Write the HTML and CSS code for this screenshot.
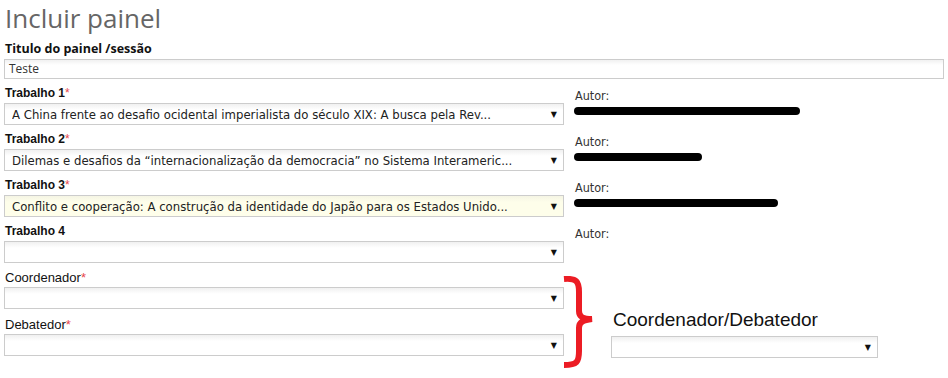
FILE: index.html
```html
<!DOCTYPE html>
<html lang="pt">
<head>
    <meta charset="UTF-8">
    <title>Incluir painel</title>
    <link rel="stylesheet" href="styles.css">
</head>
<body>
    <div class="page">
        <h1 class="page-title">Incluir painel</h1>

        <div class="field field-title">
            <label class="title-label">Titulo do painel /sessão</label>
            <div class="text-input">Teste</div>
        </div>

        <div class="work-row">
            <div class="field">
                <label>Trabalho 1<span class="req">*</span></label>
                <div class="select">
                    <span class="select-text">A China frente ao desafio ocidental imperialista do século XIX: A busca pela Rev...</span>
                    <span class="arrow">&#9660;</span>
                </div>
            </div>
            <div class="author">
                <div class="author-label">Autor:</div>
                <div class="redacted" style="width: 226px"></div>
            </div>
        </div>

        <div class="work-row">
            <div class="field">
                <label>Trabalho 2<span class="req">*</span></label>
                <div class="select">
                    <span class="select-text">Dilemas e desafios da “internacionalização da democracia” no Sistema Interameric...</span>
                    <span class="arrow">&#9660;</span>
                </div>
            </div>
            <div class="author">
                <div class="author-label">Autor:</div>
                <div class="redacted" style="width: 128px"></div>
            </div>
        </div>

        <div class="work-row">
            <div class="field">
                <label>Trabalho 3<span class="req">*</span></label>
                <div class="select filled">
                    <span class="select-text">Conflito e cooperação: A construção da identidade do Japão para os Estados Unido...</span>
                    <span class="arrow">&#9660;</span>
                </div>
            </div>
            <div class="author">
                <div class="author-label">Autor:</div>
                <div class="redacted" style="width: 204px"></div>
            </div>
        </div>

        <div class="work-row">
            <div class="field">
                <label>Trabalho 4</label>
                <div class="select">
                    <span class="select-text"></span>
                    <span class="arrow">&#9660;</span>
                </div>
            </div>
            <div class="author">
                <div class="author-label">Autor:</div>
            </div>
        </div>

        <div class="people-row">
            <div class="people-col">
                <div class="field">
                    <label class="plain">Coordenador<span class="req">*</span></label>
                    <div class="select">
                        <span class="select-text"></span>
                        <span class="arrow">&#9660;</span>
                    </div>
                </div>
                <div class="field">
                    <label class="plain">Debatedor<span class="req">*</span></label>
                    <div class="select">
                        <span class="select-text"></span>
                        <span class="arrow">&#9660;</span>
                    </div>
                </div>
            </div>

            <svg class="brace" width="32" height="92" viewBox="0 0 32 92">
                <path d="M1 3 C14 2 16 6 16 16 L16 35 C16 41 20 43 29 43 C20 44 16 46 16 52 L16 75 C16 86 14 89 1 89"
                      fill="none" stroke="#ec1c24" stroke-width="6" stroke-linejoin="miter"/>
            </svg>

            <div class="joint">
                <div class="joint-label">Coordenador/Debatedor</div>
                <div class="select small">
                    <span class="select-text"></span>
                    <span class="arrow">&#9660;</span>
                </div>
            </div>
        </div>
    </div>
</body>
</html>
```

FILE: styles.css
```css
body {
    margin: 0;
    background-color: #fff;
    font-family: "Liberation Sans", Arial, sans-serif;
    color: #222;
}

.page {
    padding: 0 4px;
}

.page-title {
    margin: 0;
    padding-left: 1px;
    font-family: "Open Sans", sans-serif;
    font-size: 26px;
    font-weight: normal;
    line-height: 36px;
    color: #666;
}

.field label {
    display: block;
    height: 15px;
    margin-bottom: 2px;
    padding-left: 1px;
    font-size: 12px;
    font-weight: bold;
    line-height: 15px;
    color: #111;
}

.field-title {
    margin-top: 4px;
}

.field-title .title-label {
    height: 17px;
    margin-bottom: 2px;
    font-family: "Open Sans", sans-serif;
    font-size: 12.5px;
    line-height: 17px;
}

.text-input {
    height: 18px;
    padding: 0 4px;
    border: 1px solid #ccc;
    background: linear-gradient(#f1f1f1, #fff 5px);
    font-family: "Open Sans", sans-serif;
    font-size: 12px;
    line-height: 18px;
    color: #333;
}

.req {
    color: #e8474c;
    font-weight: normal;
}

.work-row {
    display: grid;
    grid-template-columns: 560px 1fr;
    column-gap: 11px;
    margin-top: 7px;
}

.select {
    display: flex;
    align-items: center;
    height: 20px;
    padding: 0 6px 0 7px;
    border: 1px solid #ccc;
    background: linear-gradient(#f0f0f0, #fff 6px);
    font-family: "DejaVu Sans Condensed", "DejaVu Sans", sans-serif;
    font-size: 13px;
    color: #222;
}

.select.filled {
    background: linear-gradient(#f5f5e4, #fefeea 6px);
}

.select-text {
    flex: 1;
    white-space: nowrap;
    overflow: hidden;
}

.arrow {
    font-family: "DejaVu Sans", sans-serif;
    font-size: 8px;
    color: #111;
}

.author {
    padding-top: 3px;
    font-family: "DejaVu Sans Condensed", "DejaVu Sans", sans-serif;
    font-size: 12.5px;
    color: #333;
}

.author-label {
    line-height: 14px;
}

.redacted {
    height: 8px;
    margin-top: 4px;
    margin-left: -1px;
    border-radius: 4px;
    background-color: #000;
}

.people-row {
    display: flex;
    margin-top: 7px;
}

.people-col {
    width: 560px;
}

.people-col .field + .field {
    margin-top: 8px;
}

.field label.plain {
    font-size: 13px;
    font-weight: normal;
    color: #111;
}

.brace {
    margin-top: 6px;
    margin-left: -1px;
    flex-shrink: 0;
}

.joint {
    margin-top: 39px;
    margin-left: 16px;
}

.joint-label {
    font-size: 19px;
    line-height: 22px;
    color: #111;
    margin-bottom: 5px;
    padding-left: 2px;
}

.select.small {
    width: 252px;
}
```
